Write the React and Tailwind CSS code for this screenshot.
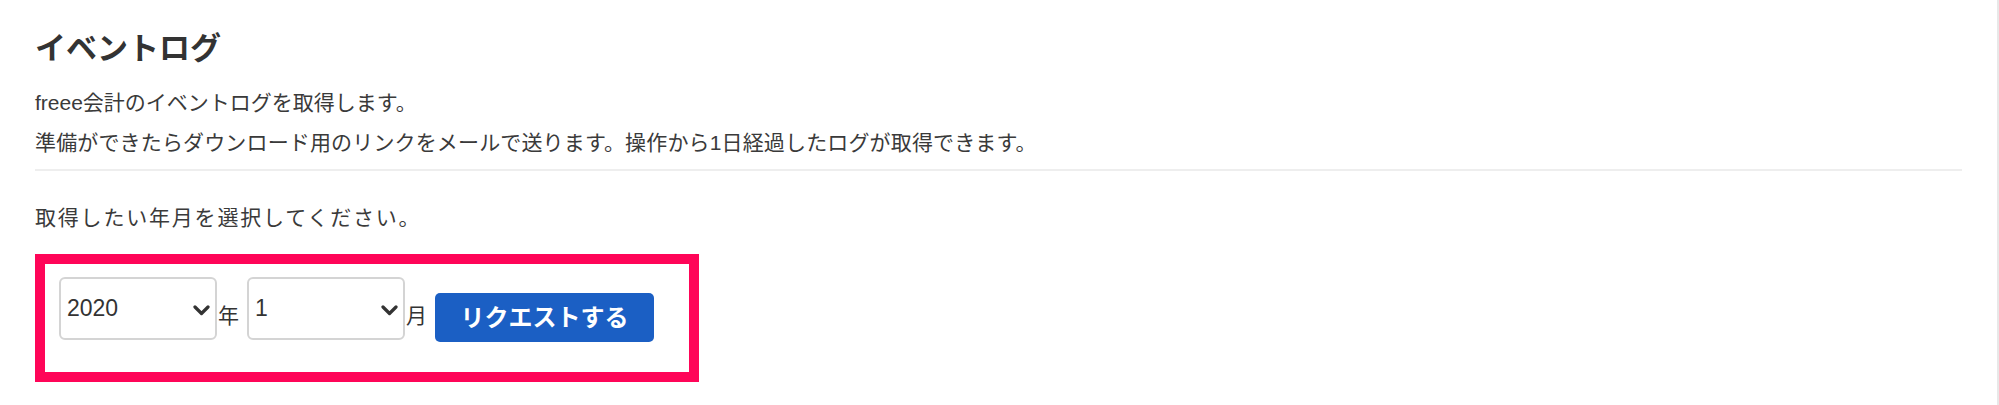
import { useState } from 'react'

const FONT = { fontFamily: '"Liberation Sans", "Noto Sans CJK JP", sans-serif' }

function Chevron() {
  return (
    <svg
      className="absolute right-[7px] top-[28px] pointer-events-none"
      width="17"
      height="11"
      viewBox="0 0 17 11"
      fill="none"
    >
      <path d="M2 2 L8.5 8.5 L15 2" stroke="#333" strokeWidth="3.2" strokeLinecap="round" strokeLinejoin="round" />
    </svg>
  )
}

function SelectBox({ value, onChange, options }) {
  return (
    <div className="relative w-[158px] h-[63px] shrink-0">
      <select
        value={value}
        onChange={(e) => onChange(e.target.value)}
        className="appearance-none w-full h-full bg-white border-2 border-[#d4d4d4] rounded-[6px] pl-[6px] text-[23px] text-[#333] outline-none"
        style={FONT}
      >
        {options.map((o) => (
          <option key={o} value={o}>
            {o}
          </option>
        ))}
      </select>
      <Chevron />
    </div>
  )
}

export default function App() {
  const [year, setYear] = useState('2020')
  const [month, setMonth] = useState('1')
  const years = ['2018', '2019', '2020']
  const months = ['1', '2', '3', '4', '5', '6', '7', '8', '9', '10', '11', '12']

  return (
    <div className="w-full min-h-[405px] bg-white border-r-2 border-[#e8e8e8] px-[35px] pt-[31px]" style={FONT}>
      {/* Header */}
      <h1 className="text-[31px] leading-[36px] font-bold text-[#333]">イベントログ</h1>
      <p className="mt-[21px] text-[21px] leading-[30px] text-[#3a3a3a]">freee会計のイベントログを取得します。</p>
      <p className="mt-[10px] text-[21px] leading-[30px] tracking-[0.15px] text-[#3a3a3a]">
        準備ができたらダウンロード用のリンクをメールで送ります。操作から1日経過したログが取得できます。
      </p>
      <div className="mt-[11px] h-[2px] bg-[#eeeeee]" />

      {/* Form */}
      <p className="mt-[32px] text-[21px] leading-[30px] tracking-[1.8px] text-[#3a3a3a]">取得したい年月を選択してください。</p>
      <div className="mt-[21px] w-[664px] border-[10px] border-[#ff0558] pl-[14px] pt-[13px] pb-[30px]">
        <div className="flex items-start">
          <SelectBox value={year} onChange={setYear} options={years} />
          <span className="mt-[27px] ml-[1px] mr-[8px] text-[21px] leading-[24px] text-[#333]">年</span>
          <SelectBox value={month} onChange={setMonth} options={months} />
          <span className="mt-[27px] ml-[1px] mr-[8px] text-[21px] leading-[24px] text-[#333]">月</span>
          <button className="mt-[16px] w-[219px] h-[49px] flex items-center justify-center rounded-[5px] bg-[#1b5fc4] text-white text-[24px] font-bold leading-none">
            リクエストする
          </button>
        </div>
      </div>
    </div>
  )
}
